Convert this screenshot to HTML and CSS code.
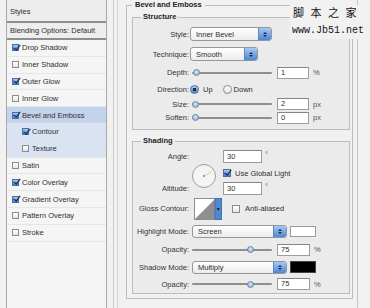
FILE: index.html
```html
<!DOCTYPE html>
<html lang="en">
<head>
    <meta charset="UTF-8">
    <meta name="viewport" content="width=device-width, initial-scale=1.0">
    <title>Layer Style - Bevel and Emboss</title>
    <link rel="stylesheet" href="styles.css">
</head>
<body>
    <div class="sidebar">
        <div class="sidebar-head">Styles</div>
        <div class="blend-row">Blending Options: Default</div>
        <ul class="style-list">
            <li><span class="box on"></span>Drop Shadow</li>
            <li><span class="box"></span>Inner Shadow</li>
            <li><span class="box on"></span>Outer Glow</li>
            <li><span class="box"></span>Inner Glow</li>
            <li class="active"><span class="box on"></span>Bevel and Emboss</li>
            <li class="sub"><span class="box on"></span>Contour</li>
            <li class="sub"><span class="box"></span>Texture</li>
            <li><span class="box"></span>Satin</li>
            <li><span class="box on"></span>Color Overlay</li>
            <li><span class="box on"></span>Gradient Overlay</li>
            <li><span class="box"></span>Pattern Overlay</li>
            <li><span class="box"></span>Stroke</li>
        </ul>
    </div>
    <div class="divider"></div>

    <div class="main">
        <fieldset class="group outer">
            <legend>Bevel and Emboss</legend>

            <fieldset class="group inner">
                <legend>Structure</legend>
                <div class="row h20">
                    <span class="label">Style:</span>
                    <div class="select w-style"><span class="value">Inner Bevel</span><span class="stepper"></span></div>
                </div>
                <div class="row h20">
                    <span class="label">Technique:</span>
                    <div class="select w-tech"><span class="value">Smooth</span><span class="stepper"></span></div>
                </div>
                <div class="row h17">
                    <span class="label">Depth:</span>
                    <div class="slider"><span class="thumb" style="left: 1px"></span></div>
                    <span class="field">1</span><span class="unit">%</span>
                </div>
                <div class="row h16">
                    <span class="label">Direction:</span>
                    <span class="radio on"></span><span class="opt">Up</span>
                    <span class="radio second"></span><span class="opt down">Down</span>
                </div>
                <div class="row h14">
                    <span class="label">Size:</span>
                    <div class="slider"><span class="thumb" style="left: 0px"></span></div>
                    <span class="field">2</span><span class="unit">px</span>
                </div>
                <div class="row h13">
                    <span class="label">Soften:</span>
                    <div class="slider"><span class="thumb" style="left: 0px"></span></div>
                    <span class="field">0</span><span class="unit">px</span>
                </div>
            </fieldset>

            <fieldset class="group inner shading">
                <legend>Shading</legend>
                <div class="angle-grid">
                    <span class="label">Angle:</span>
                    <svg class="dial" width="24" height="24" viewBox="0 0 24 24">
                        <circle cx="12" cy="12" r="11.5" fill="#f4f4f4" stroke="#9d9d9d"/>
                        <line x1="12" y1="12" x2="19.8" y2="7.5" stroke="#d6d0b8"/>
                        <circle cx="12" cy="12" r="0.9" fill="#7a7a7a"/>
                    </svg>
                    <div class="cell"><span class="field wide">30</span><span class="unit deg">°</span></div>
                    <div class="cell global"><span class="box big on"></span><span class="opt">Use Global Light</span></div>
                    <span class="label alt">Altitude:</span>
                    <div class="cell alt"><span class="field wide">30</span><span class="unit deg">°</span></div>
                </div>
                <div class="row h27">
                    <span class="label">Gloss Contour:</span>
                    <svg class="contour" width="28" height="22" viewBox="0 0 28 22">
                        <rect x="0.5" y="0.5" width="27" height="21" fill="#ffffff" stroke="#8e8e8e"/>
                        <polygon points="1,21 21,1 21,21" fill="#8f8f8f"/>
                        <rect x="21" y="0.5" width="6.5" height="21" fill="#4f89d6" stroke="#4670a8"/>
                        <polygon points="22.6,10 25.9,10 24.25,13" fill="#1c2740"/>
                    </svg>
                    <span class="box big anti"></span><span class="opt aa">Anti-aliased</span>
                </div>
                <div class="row h19">
                    <span class="label">Highlight Mode:</span>
                    <div class="select w-mode"><span class="value">Screen</span><span class="stepper"></span></div>
                    <span class="swatch white"></span>
                </div>
                <div class="row h17">
                    <span class="label">Opacity:</span>
                    <div class="slider"><span class="thumb" style="left: 55px"></span></div>
                    <span class="field op">75</span><span class="unit">%</span>
                </div>
                <div class="row h18">
                    <span class="label">Shadow Mode:</span>
                    <div class="select w-mode"><span class="value">Multiply</span><span class="stepper"></span></div>
                    <span class="swatch black"></span>
                </div>
                <div class="row h16">
                    <span class="label">Opacity:</span>
                    <div class="slider"><span class="thumb" style="left: 55px"></span></div>
                    <span class="field op">75</span><span class="unit">%</span>
                </div>
            </fieldset>
        </fieldset>
    </div>

    <div class="watermark">
        <div class="wm-cn">脚本之家</div>
        <div class="wm-url">www.Jb51.net</div>
    </div>
</body>
</html>
```

FILE: styles.css
```css
body {
    margin: 0;
    width: 370px;
    height: 308px;
    display: flex;
    position: relative;
    overflow: hidden;
    background-color: #f1f1f1;
    font-family: "Liberation Sans", Arial, sans-serif;
    font-size: 7.5px;
    color: #2e2e2e;
}

/* left list of styles */
.sidebar {
    margin-left: 6px;
    width: 99px;
    border-left: 1px solid #a8a8a8;
    border-right: 1px solid #a8a8a8;
    background-color: #f5f5f5;
}
.sidebar-head {
    height: 19px;
    padding: 2px 0 0 3px;
    line-height: 19px;
    border-bottom: 2px solid #8e8e8e;
    background-color: #ececec;
}
.blend-row {
    height: 15px;
    line-height: 15px;
    padding-left: 3px;
    border-bottom: 2px solid #8e8e8e;
    background-color: #eeeeee;
}
.style-list {
    list-style: none;
    margin: 0;
    padding: 0;
}
.style-list li {
    height: 16.8px;
    box-sizing: border-box;
    display: flex;
    align-items: center;
    padding-left: 5px;
    border-bottom: 1px solid #e6e6e6;
}
.style-list li.active {
    background-color: #c3d3ec;
}
.style-list li.sub {
    padding-left: 15px;
    background-color: #d9e3f2;
}
.box {
    position: relative;
    width: 7px;
    height: 7px;
    margin-right: 3px;
    box-sizing: border-box;
    border: 1px solid #8c8c8c;
    background: linear-gradient(#ffffff, #e4e4e4);
    flex-shrink: 0;
}
.box.on {
    border-color: #4a6fa5;
    background: linear-gradient(#a9c9f1, #437dd2);
}
.box.on::after {
    content: "";
    position: absolute;
    left: 1.5px;
    top: -2.5px;
    width: 2.5px;
    height: 6px;
    border-right: 1.6px solid #1a243c;
    border-bottom: 1.6px solid #1a243c;
    transform: rotate(38deg);
}
.box.big {
    width: 8px;
    height: 8px;
    margin-right: 0;
}

.divider {
    margin-left: 6px;
    width: 3px;
    border-left: 1px solid #cacaca;
    border-right: 1px solid #d6d6d6;
}

/* right settings panel */
.main {
    padding: 0 4px 0 8px;
    border-right: 1px solid #c6c6c6;
}
.group {
    margin: 0;
    min-width: 0;
    border: 1px solid #bcbcbc;
}
.group legend {
    padding: 0 2px;
    line-height: 10px;
    font-weight: bold;
    color: #222;
}
.outer {
    width: 227px;
    box-sizing: border-box;
    padding: 2px 2px 4px 5px;
}
.outer > legend {
    padding: 0 3px;
}
.inner {
    padding: 2px 0 5px 2px;
    background-color: #ebebeb;
}
.inner > legend {
    margin-left: 6px;
}
.shading {
    margin-top: 6px;
    padding-bottom: 1px;
}

.row {
    display: flex;
    align-items: center;
}
.h13 { height: 13px; }
.h14 { height: 14px; }
.h16 { height: 16px; }
.h17 { height: 17px; }
.h18 { height: 18px; }
.h19 { height: 19px; }
.h20 { height: 20px; }
.h27 { height: 27px; }

.label {
    width: 54px;
    flex-shrink: 0;
    text-align: right;
    white-space: nowrap;
    color: #333;
}

.select {
    height: 14px;
    box-sizing: border-box;
    display: flex;
    align-items: center;
    padding-left: 5px;
    border: 1px solid #979797;
    border-radius: 3px;
    background: linear-gradient(#ffffff, #ececec);
    overflow: hidden;
}
.select .value {
    flex: 1;
}
.w-style { width: 82px; margin-left: 1px; }
.w-tech { width: 68px; margin-left: 1px; }
.w-mode { width: 95px; margin-left: 3px; height: 13px; }
.stepper {
    width: 12px;
    align-self: stretch;
    display: flex;
    flex-direction: column;
    align-items: center;
    justify-content: center;
    gap: 1px;
    border-left: 1px solid #5c86bf;
    background: linear-gradient(#a8c8f0, #4a86d8);
}
.stepper::before {
    content: "";
    border-left: 2px solid transparent;
    border-right: 2px solid transparent;
    border-bottom: 2.5px solid #1e2a44;
}
.stepper::after {
    content: "";
    border-left: 2px solid transparent;
    border-right: 2px solid transparent;
    border-top: 2.5px solid #1e2a44;
}

.slider {
    position: relative;
    width: 80px;
    height: 8px;
    margin-left: 3px;
    flex-shrink: 0;
}
.slider::before {
    content: "";
    position: absolute;
    left: 0;
    right: 0;
    top: 3px;
    height: 2px;
    border-radius: 1px;
    background-color: #8f8f8f;
}
.thumb {
    position: absolute;
    top: 0.5px;
    width: 7px;
    height: 7px;
    box-sizing: border-box;
    border-radius: 50%;
    border: 1px solid #6e87ad;
    background: radial-gradient(circle at 50% 40%, #e4edf8, #7f9dc8);
}

.field {
    width: 32px;
    height: 12px;
    margin-left: 5px;
    box-sizing: border-box;
    padding-left: 3px;
    line-height: 10px;
    border: 1px solid #9d9d9d;
    border-top-color: #858585;
    background-color: #fff;
}
.field.op { width: 33px; }
.field.wide {
    width: 39px;
    height: 13px;
    margin-left: 3px;
    line-height: 11px;
}
.unit {
    margin-left: 4px;
    color: #555;
}
.unit.deg {
    margin-left: 3px;
    align-self: flex-start;
}

.radio {
    width: 9px;
    height: 9px;
    margin-left: 1px;
    box-sizing: border-box;
    border-radius: 50%;
    border: 1px solid #8a8a8a;
    background: linear-gradient(#ffffff, #e4e4e4);
}
.radio.on {
    border-color: #4a6fa5;
    background: radial-gradient(circle, #1b2845 0 1.4px, transparent 2px), linear-gradient(#b4d0f3, #4a84d6);
}
.radio.second {
    margin-left: 10px;
}
.opt {
    margin-left: 4px;
}
.opt.down {
    margin-left: 2px;
}

.angle-grid {
    display: grid;
    grid-template-columns: 54px 31px auto;
    grid-template-rows: 16px 18px 13px;
    align-items: center;
}
.dial {
    grid-column: 2;
    grid-row: 1 / 4;
    align-self: start;
    margin: 16px 0 0 3px;
}
.cell {
    display: flex;
    align-items: center;
}
.cell.global {
    grid-column: 3;
    grid-row: 2;
    padding-left: 3px;
}
.label.alt {
    grid-column: 1;
    grid-row: 3;
}
.cell.alt {
    grid-column: 3;
    grid-row: 3;
}

.contour {
    margin-left: 5px;
}
.box.anti {
    margin-left: 10px;
}
.opt.aa {
    margin-left: 5px;
}

.swatch {
    width: 26px;
    height: 11px;
    margin-left: 3px;
    box-sizing: border-box;
    border: 1px solid #9a9a9a;
}
.swatch.white { background-color: #fff; }
.swatch.black {
    height: 12px;
    border-color: #444;
    background-color: #000;
}

/* site watermark over the top right corner */
.watermark {
    position: absolute;
    left: 290px;
    top: 5px;
    padding: 0 3px 2px;
    background-color: #f1f1f1;
    color: #111;
}
.wm-cn {
    font-family: "Noto Sans CJK SC", sans-serif;
    font-size: 11px;
    line-height: 15px;
    letter-spacing: 6.5px;
}
.wm-url {
    margin: 5px 0 0 -1px;
    font-family: "Liberation Mono", monospace;
    font-size: 10px;
    line-height: 12px;
}
```
